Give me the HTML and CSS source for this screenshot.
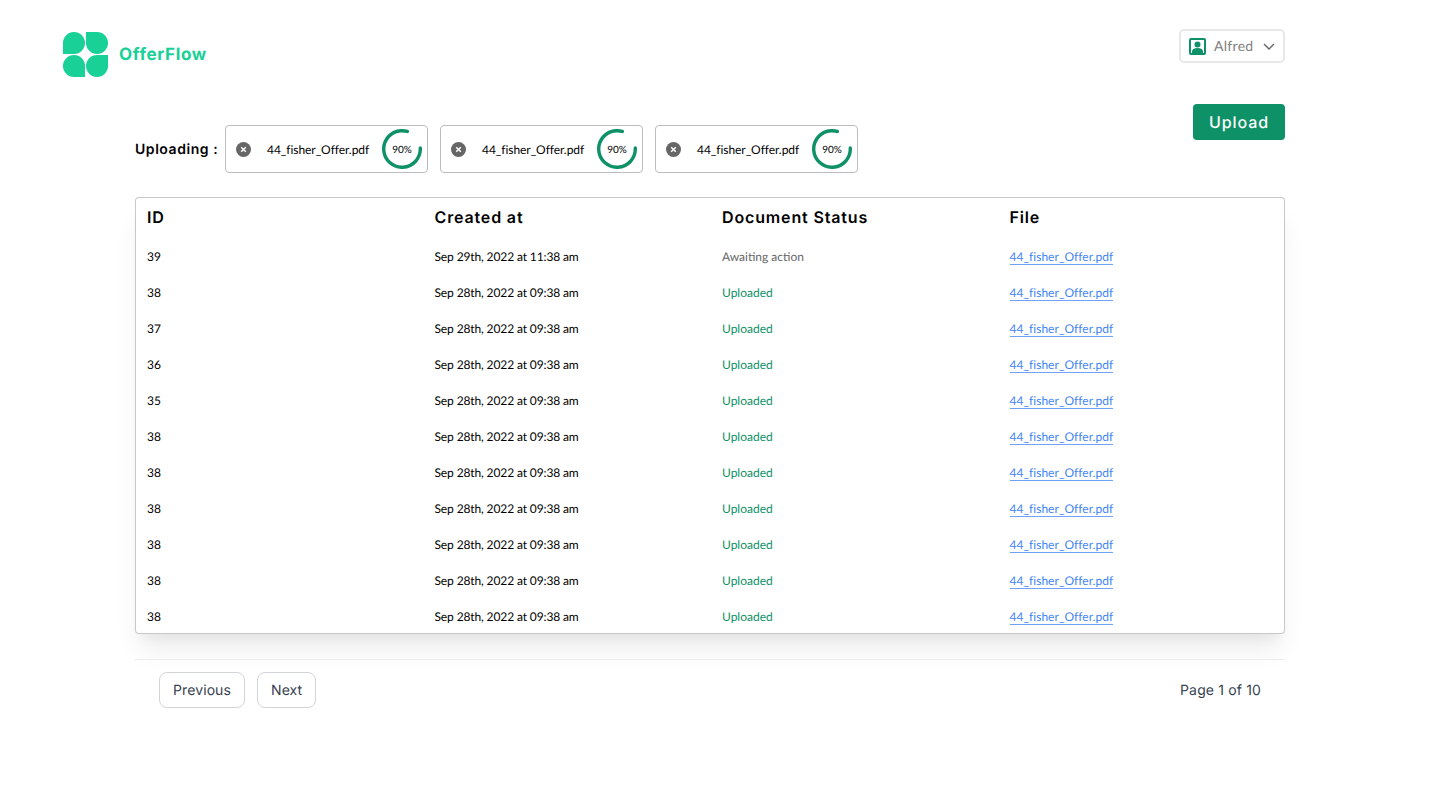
FILE: index.html
```html
<!DOCTYPE html>
<html lang="en">
<head>
<meta charset="utf-8">
<title>OfferFlow</title>
<link rel="stylesheet" href="styles.css">
</head>
<body>
<header class="topbar">
  <div class="brand">
    <svg class="brand-mark" width="45" height="45" viewBox="0 0 45 45" aria-hidden="true">
      <path d="M0 22V11A11 11 0 1 1 11 22Z" fill="#19d096"/>
      <path d="M23 0H34A11 11 0 1 1 23 11Z" fill="#19d096"/>
      <path d="M22 45H11A11 11 0 1 1 22 34Z" fill="#19d096"/>
      <path d="M45 23V34A11 11 0 1 1 34 23Z" fill="#19d096"/>
    </svg>
    <span class="brand-name">OfferFlow</span>
  </div>
  <button class="user-menu" type="button">
    <svg width="17" height="17" viewBox="0 0 17 17" aria-hidden="true">
      <rect width="17" height="17" rx="2" fill="#0f9167"/>
      <rect x="2" y="2" width="13" height="13" fill="#fff"/>
      <circle cx="8.5" cy="6.5" r="3" fill="#0f9167"/>
      <path d="M3 15v-1.5c0-2 2-3.500 5.500-3.500s5.500 1.500 5.500 3.500V15z" fill="#0f9167"/>
    </svg>
    <span class="user-name">Alfred</span>
    <svg width="12" height="7" viewBox="0 0 12 7" aria-hidden="true"><path d="M1 1l5 5 5-5" fill="none" stroke="#666" stroke-width="1.4"/></svg>
  </button>
</header>

<main class="content">
  <section class="upload-bar">
    <div class="uploads">
      <span class="uploads-label">Uploading :</span>
      <div class="chip">
        <svg class="chip-x" width="15" height="15" viewBox="0 0 15 15" aria-hidden="true"><circle cx="7.5" cy="7.5" r="7.5" fill="#666"/><path d="M5.2 5.2l4.6 4.6M9.8 5.2l-4.6 4.6" stroke="#fff" stroke-width="1.5"/></svg>
        <span class="chip-name">44_fisher_Offer.pdf</span>
        <span class="ring">
          <svg width="40" height="40" viewBox="0 0 40 40" aria-hidden="true"><circle cx="20" cy="20" r="18.3" fill="none" stroke="#0f9167" stroke-width="3.4" stroke-linecap="round" stroke-dasharray="92 115" transform="rotate(-3 20 20)"/></svg>
          <span class="ring-text">90%</span>
        </span>
      </div>
      <div class="chip">
        <svg class="chip-x" width="15" height="15" viewBox="0 0 15 15" aria-hidden="true"><circle cx="7.5" cy="7.5" r="7.5" fill="#666"/><path d="M5.2 5.2l4.6 4.6M9.8 5.2l-4.6 4.6" stroke="#fff" stroke-width="1.5"/></svg>
        <span class="chip-name">44_fisher_Offer.pdf</span>
        <span class="ring">
          <svg width="40" height="40" viewBox="0 0 40 40" aria-hidden="true"><circle cx="20" cy="20" r="18.3" fill="none" stroke="#0f9167" stroke-width="3.4" stroke-linecap="round" stroke-dasharray="92 115" transform="rotate(-3 20 20)"/></svg>
          <span class="ring-text">90%</span>
        </span>
      </div>
      <div class="chip">
        <svg class="chip-x" width="15" height="15" viewBox="0 0 15 15" aria-hidden="true"><circle cx="7.5" cy="7.5" r="7.5" fill="#666"/><path d="M5.2 5.2l4.6 4.6M9.8 5.2l-4.6 4.6" stroke="#fff" stroke-width="1.5"/></svg>
        <span class="chip-name">44_fisher_Offer.pdf</span>
        <span class="ring">
          <svg width="40" height="40" viewBox="0 0 40 40" aria-hidden="true"><circle cx="20" cy="20" r="18.3" fill="none" stroke="#0f9167" stroke-width="3.4" stroke-linecap="round" stroke-dasharray="92 115" transform="rotate(-3 20 20)"/></svg>
          <span class="ring-text">90%</span>
        </span>
      </div>
    </div>
    <button class="upload-btn" type="button">Upload</button>
  </section>

  <section class="card">
    <table class="docs">
      <thead>
        <tr><th>ID</th><th>Created at</th><th>Document Status</th><th>File</th></tr>
      </thead>
      <tbody>
        <tr><td>39</td><td class="when">Sep 29th, 2022 at 11:38 am</td><td class="waiting">Awaiting action</td><td><a href="#">44_fisher_Offer.pdf</a></td></tr>
        <tr><td>38</td><td class="when">Sep 28th, 2022 at 09:38 am</td><td class="done">Uploaded</td><td><a href="#">44_fisher_Offer.pdf</a></td></tr>
        <tr><td>37</td><td class="when">Sep 28th, 2022 at 09:38 am</td><td class="done">Uploaded</td><td><a href="#">44_fisher_Offer.pdf</a></td></tr>
        <tr><td>36</td><td class="when">Sep 28th, 2022 at 09:38 am</td><td class="done">Uploaded</td><td><a href="#">44_fisher_Offer.pdf</a></td></tr>
        <tr><td>35</td><td class="when">Sep 28th, 2022 at 09:38 am</td><td class="done">Uploaded</td><td><a href="#">44_fisher_Offer.pdf</a></td></tr>
        <tr><td>38</td><td class="when">Sep 28th, 2022 at 09:38 am</td><td class="done">Uploaded</td><td><a href="#">44_fisher_Offer.pdf</a></td></tr>
        <tr><td>38</td><td class="when">Sep 28th, 2022 at 09:38 am</td><td class="done">Uploaded</td><td><a href="#">44_fisher_Offer.pdf</a></td></tr>
        <tr><td>38</td><td class="when">Sep 28th, 2022 at 09:38 am</td><td class="done">Uploaded</td><td><a href="#">44_fisher_Offer.pdf</a></td></tr>
        <tr><td>38</td><td class="when">Sep 28th, 2022 at 09:38 am</td><td class="done">Uploaded</td><td><a href="#">44_fisher_Offer.pdf</a></td></tr>
        <tr><td>38</td><td class="when">Sep 28th, 2022 at 09:38 am</td><td class="done">Uploaded</td><td><a href="#">44_fisher_Offer.pdf</a></td></tr>
        <tr><td>38</td><td class="when">Sep 28th, 2022 at 09:38 am</td><td class="done">Uploaded</td><td><a href="#">44_fisher_Offer.pdf</a></td></tr>
      </tbody>
    </table>
  </section>

  <nav class="pager">
    <div class="pager-btns">
      <button class="pager-btn" type="button">Previous</button>
      <button class="pager-btn" type="button">Next</button>
    </div>
    <span class="pager-info">Page 1 of 10</span>
  </nav>
</main>
</body>
</html>
```

FILE: styles.css
```css
* { box-sizing: border-box; }
html, body { margin: 0; padding: 0; }
body {
  background: #fff;
  color: #000;
  font-family: "Lato", "Liberation Sans", sans-serif;
  text-rendering: geometricPrecision;
  width: 1441px;
  height: 798px;
  overflow: hidden;
}
button { font-family: inherit; cursor: pointer; text-rendering: inherit; }

.topbar {
  display: flex;
  justify-content: space-between;
  align-items: flex-start;
  width: 1222px;
  margin-left: 63px;
  padding-top: 29px;
  height: 104px;
}
.brand {
  display: flex;
  align-items: center;
  gap: 11px;
  margin-top: 3px;
}
.brand-mark { display: block; }
.brand-name {
  padding-top: 1px;
  font-family: "Inter", sans-serif;
  font-size: 17px;
  font-weight: 700;
  color: #19d096;
  letter-spacing: 0.65px;
}
.user-menu {
  display: flex;
  align-items: center;
  width: 106px;
  height: 34px;
  padding: 0 0 0 8px;
  background: #fff;
  border: 2px solid #e8e8e8;
  border-radius: 5px;
}
.user-name {
  margin: 0 9px 2px 8px;
  font-size: 14px;
  letter-spacing: 0.3px;
  color: #808080;
}

.content {
  width: 1150px;
  margin-left: 135px;
}
.upload-bar {
  display: flex;
  justify-content: space-between;
  align-items: flex-start;
  height: 93px;
}
.uploads {
  display: flex;
  align-items: center;
  gap: 12px;
  margin-top: 21px;
}
.uploads-label {
  flex: 0 0 78px;
  min-width: 0;
  font-family: "Inter", sans-serif;
  font-size: 14px;
  font-weight: 600;
  letter-spacing: 0.55px;
  white-space: nowrap;
}
.chip {
  display: flex;
  align-items: center;
  width: 203px;
  height: 48px;
  padding: 0 5px 0 10px;
  border: 1px solid #bdbdbd;
  border-radius: 4px;
}
.chip-x { flex: none; }
.chip-name {
  flex: 1;
  margin-left: 16px;
  font-size: 12px;
  letter-spacing: -0.05px;
  white-space: nowrap;
}
.ring {
  position: relative;
  display: block;
  width: 40px;
  height: 40px;
}
.ring svg { display: block; }
.ring-text {
  position: absolute;
  inset: 0;
  display: flex;
  align-items: center;
  justify-content: center;
  padding-top: 1px;
  font-size: 10px;
}
.upload-btn {
  width: 92px;
  height: 36px;
  padding: 0;
  border: 0;
  border-radius: 4px;
  background: #0f9167;
  color: #fff;
  font-family: "Inter", sans-serif;
  font-size: 16px;
  font-weight: 500;
  letter-spacing: 0.9px;
}

.card {
  height: 437px;
  padding-top: 1px;
  overflow: hidden;
  background: #fff;
  border-radius: 4px;
  box-shadow: inset 0 0 0 1px #c8c8c8, 0 20px 25px -5px rgba(0, 0, 0, 0.08), 0 10px 10px -5px rgba(0, 0, 0, 0.04);
}
.docs {
  width: 100%;
  table-layout: fixed;
  border-collapse: collapse;
}
.docs th {
  height: 40px;
  padding: 0 12px 2px;
  text-align: left;
  font-family: "Inter", sans-serif;
  font-size: 16px;
  font-weight: 600;
  letter-spacing: 0.85px;
}
.docs td {
  height: 36px;
  padding: 0 12px;
  font-size: 12px;
  white-space: nowrap;
}
.docs td.when { letter-spacing: -0.12px; }
.docs td.waiting { color: #666; }
.docs td.done { color: #0f9167; }
.docs a {
  color: #4285f4;
  text-decoration: none;
  letter-spacing: 0.03px;
  border-bottom: 1px solid #6fa3f7;
}

.pager {
  display: flex;
  justify-content: space-between;
  align-items: center;
  margin-top: 25px;
  padding: 12px 24px 26px;
  border-top: 1px solid #ececec;
}
.pager-btns { display: flex; gap: 12px; }
.pager-btn {
  height: 36px;
  padding: 0 13px;
  background: #fff;
  border: 1px solid #d1d5db;
  border-radius: 8px;
  color: #374151;
  font-family: "Inter", sans-serif;
  font-size: 14px;
  font-weight: 400;
  letter-spacing: 0.1px;
}
.pager-info {
  color: #374151;
  font-family: "Inter", sans-serif;
  font-size: 14px;
  letter-spacing: 0.15px;
}
```
